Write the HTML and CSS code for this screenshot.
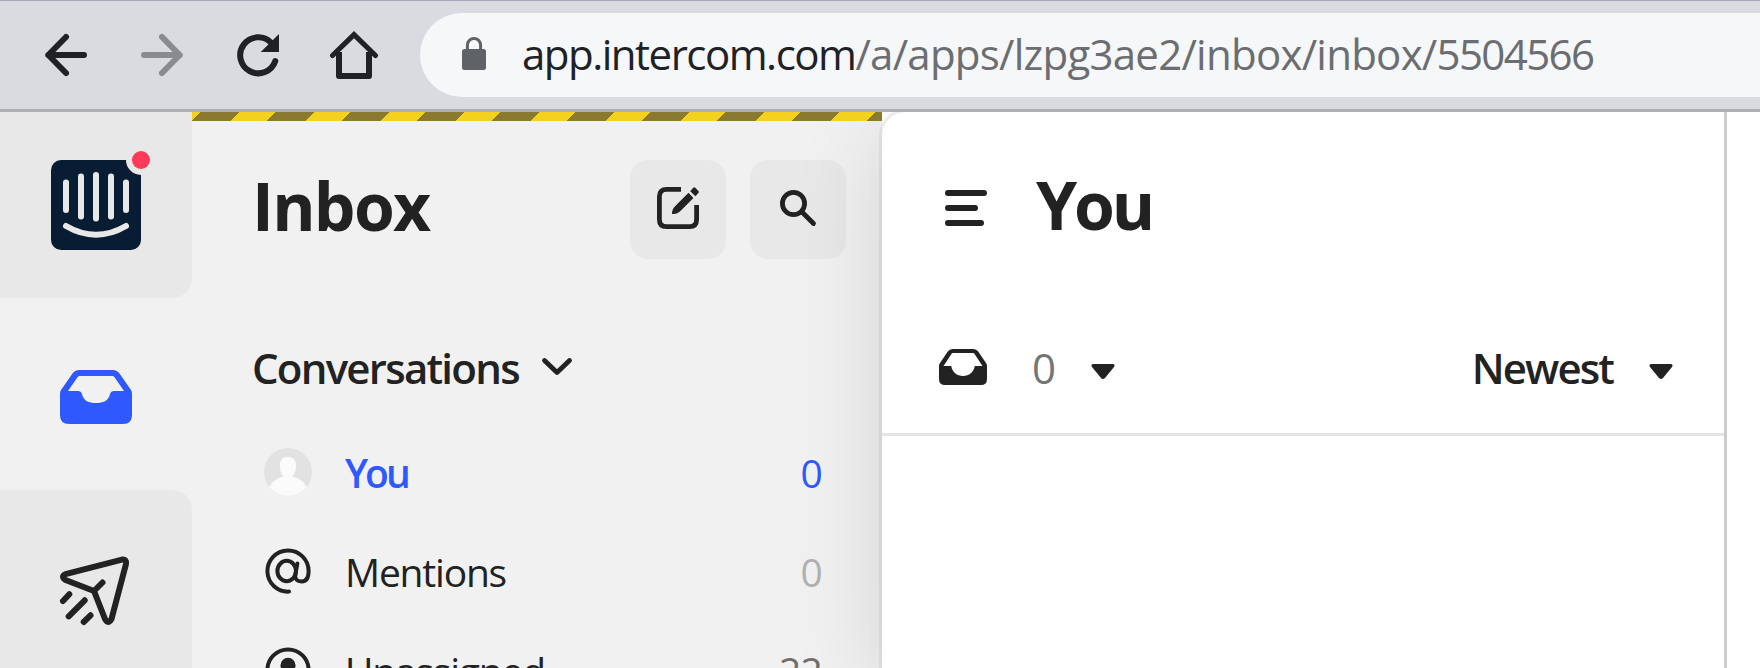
FILE: index.html
```html
<!DOCTYPE html>
<html lang="en">
<head>
<meta charset="utf-8">
<title>Inbox</title>
<link rel="stylesheet" href="styles.css">
</head>
<body>
<header class="browser-bar">
  <nav class="browser-nav">
    <svg width="42" height="42" viewBox="0 0 42 42" class="line-icon w6"><path d="M21 3L3.3 21L21 39M3.3 21H39"/></svg>
    <svg width="42" height="42" viewBox="0 0 42 42" class="line-icon w6 disabled"><path d="M21 3L38.7 21L21 39M38.7 21H3"/></svg>
    <svg width="42" height="42" viewBox="0 0 42 42" class="line-icon w6"><path d="M38.3 27A18 18 0 1 1 34 8.6"/><path class="solid" d="M42 0V18H23.7Z"/></svg>
    <svg width="48" height="48" viewBox="0 0 48 48" class="line-icon w6 home"><path class="roof" d="M2.5 24.5L24 3.6L45.5 24.5"/><path d="M9 21V45H39V21" stroke-linecap="butt"/></svg>
  </nav>
  <div class="address">
    <svg width="24" height="33" viewBox="0 0 24 33" class="lock"><rect y="12" width="24" height="21" rx="2.500"/><path d="M5.400 13V8.100a6.600 6.600 0 0 1 13.200 0V13" fill="none" stroke="#5f6368" stroke-width="3"/></svg>
    <span class="url"><span class="host">app.intercom.com</span><span class="path">/a/apps/lzpg3ae2/inbox/inbox/</span><span class="path path-id">5504566</span></span>
  </div>
</header>
<main class="app">
  <nav class="rail">
    <div class="rail-top">
      <svg width="105" height="105" viewBox="0 -15 105 105" class="logo">
        <rect width="90" height="90" rx="10" fill="#081d34"/>
        <g fill="none" stroke="#e8e8e8" stroke-width="6" stroke-linecap="round"><path d="M15 22.5V50M30 16.5V56.5M45 15V58.5M60 16.5V56.5M75 22.5V50M15 66Q45 83.5 75 66"/></g>
        <circle cx="90" cy="0" r="15" fill="#e8e8e8"/><circle cx="90" cy="0" r="9" fill="#fd3a57"/>
      </svg>
    </div>
    <div class="rail-active">
      <svg width="72" height="54" viewBox="0 0 72 54"><path fill="#2f58ff" fill-rule="evenodd" d="M19 0H53Q57 0 59.5 3.5L71 20Q72 21.5 72 24V45Q72 54 63 54H9Q0 54 0 45V24Q0 21.5 1 20L12.5 3.5Q15 0 19 0ZM19.5 6Q18.3 6 17.5 7.2L8 21H18Q21 21 22 24C23.5 31 29 33 36 33C43 33 48.5 31 50 24Q51 21 54 21H64L54.5 7.2Q53.7 6 52.5 6Z"/></svg>
    </div>
    <div class="rail-bottom">
      <svg width="70" height="70" viewBox="0 0 70 70" class="line-icon w6"><path d="M5.5 18.2L62 3.6Q67 3 66 8L51.5 63Q48 69 45 63L34 35L5.5 24Q0.5 20.5 5.5 18.2ZM34 35L42.5 26.5M9.3 38.3L3 45M24.7 44.3L8.7 60.3M30.5 59.3L23.7 66"/></svg>
    </div>
  </nav>
  <aside class="sidebar">
    <div class="warning-stripe"></div>
    <div class="sidebar-head">
      <h1 class="title title-inbox">Inbox</h1>
      <button class="tool"><svg width="42" height="42" viewBox="0 0 42 42"><path d="M24 2.4H9.5Q2.4 2.4 2.4 9.5V32.500Q2.4 39.600 9.500 39.600H32.500Q39.600 39.600 39.600 32.500V18" fill="none" stroke="#222" stroke-width="4.800"/><path fill="#222" d="M15 27C15 22.500 16.800 20.500 20 17.300L31.500 5.800L36.400 11L25 22.400C22 25.400 20 27 15 27ZM33.200 4.200L36.200 .8Q37.200 -.2 38.300 .8L41.400 4Q42.400 5 41.400 6.100L38.400 9.200Z"/></svg></button>
      <button class="tool"><svg width="36" height="36" viewBox="0 0 36 36" class="line-icon w5"><circle cx="13.500" cy="13.500" r="11.100"/><path d="M22 22L33.500 33.500"/></svg></button>
    </div>
    <div class="section">
      <span class="section-label">Conversations</span>
      <svg width="30" height="18" viewBox="0 0 30 18" class="line-icon w5"><path d="M2.500 2.500L15 14.500L27.500 2.500"/></svg>
    </div>
    <ul class="menu">
      <li class="row current">
        <svg width="48" height="48" viewBox="0 0 48 48"><defs><clipPath id="disc"><circle cx="24" cy="24" r="24"/></clipPath></defs><g clip-path="url(#disc)"><rect width="48" height="48" fill="#e2e2e2"/><path fill="#fbfbfb" d="M24 9C29.500 9 32 12 32 17.500C32 23 30.500 26 28.500 28.800C36 30 41 35 43 40V48H5V40C7 35 12 30 19.500 28.800C17.500 26 16 23 16 17.500C16 12 18.500 9 24 9Z"/></g></svg>
        <span class="label label-you">You</span><span class="count">0</span>
      </li>
      <li class="row">
        <svg width="48" height="48" viewBox="0 0 48 48" class="line-icon w4"><path d="M25 44.600A20.600 20.600 0 1 1 44.600 24C44.600 31 42 34.500 37.500 34.500C33 34.500 30.700 32 31.300 28L33.400 16.500"/><ellipse cx="22.700" cy="24" rx="9.300" ry="10.200"/></svg>
        <span class="label">Mentions</span><span class="count faint">0</span>
      </li>
      <li class="row">
        <svg width="48" height="48" viewBox="0 0 48 48" class="line-icon w4"><circle cx="24" cy="24" r="20.600"/><circle cx="24" cy="19.300" r="7.500" fill="#222" stroke="none"/><path d="M10 38Q24 24 38 38" fill="#222"/></svg>
        <span class="label">Unassigned</span><span class="count muted">22</span>
      </li>
    </ul>
  </aside>
  <section class="panel">
    <div class="panel-head">
      <svg width="42" height="36" viewBox="0 0 42 36" class="line-icon w6 burger"><path d="M3 3H39M3 18H30M3 33H36"/></svg>
      <h2 class="title title-you">You</h2>
    </div>
    <div class="filters">
      <svg width="48" height="36" viewBox="0 0 48 36"><path fill="#222" fill-rule="evenodd" d="M13.500 0H34.500Q37.500 0 39.200 2.500L47 14Q48 15.300 48 17V30Q48 36 42 36H6Q0 36 0 30V17Q0 15.300 1 14L8.800 2.500Q10.500 0 13.500 0ZM14 4Q13 4 12.400 4.900L4.500 17H12.300C13 23 18 27 24 27C30 27 35 23 35.700 17H43.500L35.600 4.900Q35 4 34 4Z"/></svg>
      <span class="filter-count">0</span>
      <svg width="24" height="16" viewBox="0 0 24 16" class="caret"><path d="M2 0H22Q24.500 .5 23 3L14 14Q12 16 10 14L1 3Q-.5 .5 2 0Z"/></svg>
      <span class="sort">Newest</span>
      <svg width="24" height="16" viewBox="0 0 24 16" class="caret"><path d="M2 0H22Q24.500 .5 23 3L14 14Q12 16 10 14L1 3Q-.5 .5 2 0Z"/></svg>
    </div>
  </section>
</main>
</body>
</html>
```
FILE: styles.css
```css
* { box-sizing: border-box; }
body {
  margin: 0;
  width: 1760px;
  height: 668px;
  overflow: hidden;
  display: flex;
  flex-direction: column;
  background: #fff;
  color: #222;
  font-family: "Open Sans", "Noto Sans", sans-serif;
}
svg { display: block; flex: none; overflow: visible; }
.line-icon { fill: none; stroke: #222; stroke-linecap: round; stroke-linejoin: round; }
.w4 { stroke-width: 4; }
.w5 { stroke-width: 4.8; }
.w6 { stroke-width: 6; }

.browser-bar {
  position: relative;
  z-index: 2;
  flex: none;
  height: 112px;
  display: flex;
  align-items: center;
  background: #dadbe0;
  border-top: 1px solid #a4a7b8;
  border-bottom: 3px solid #aeafb3;
  padding-left: 45px;
}
.browser-nav { display: flex; align-items: center; gap: 54px; width: 375px; }
.browser-nav .line-icon { stroke: #202124; }
.browser-nav .disabled { stroke: #8a8b8e; }
.browser-nav .home { margin-left: -3px; }
.browser-nav .solid { fill: #202124; stroke: none; }
.roof { stroke-width: 5.2; stroke-linejoin: miter; }
.address {
  flex: 1;
  height: 84px;
  display: flex;
  align-items: center;
  border-radius: 42px 0 0 42px;
  background: #f5f7f9;
  padding-left: 42px;
}
.lock { fill: #5f6368; margin-top: -3px; }
.url { margin: -3px 0 0 36px; font-size: 42px; white-space: nowrap; }
.host { color: #202124; letter-spacing: -1.5px; }
.path { color: #6b6d70; letter-spacing: -.75px; }
.path-id { letter-spacing: -1.6px; }

.app { flex: 1; display: flex; min-height: 0; overflow: hidden; }
.rail { width: 192px; flex: none; display: flex; flex-direction: column; background: #f1f1f1; }
.rail-top { height: 186px; background: #e8e8e8; border-radius: 0 0 20px 0; padding: 33px 0 0 51px; }
.rail-active { height: 192px; padding: 72px 0 0 60px; }
.rail-bottom { flex: 1; background: #e8e8e8; border-radius: 0 20px 0 0; padding: 66px 0 0 60px; }

.sidebar { width: 690px; flex: none; background: #f1f1f1; height: 556px; overflow: hidden; }
.warning-stripe {
  position: relative;
  z-index: 1;
  height: 9px;
  background: repeating-linear-gradient(135deg, #f4d01f 0 6.36px, #8a7a2f 6.36px 33.9px, #f4d01f 33.9px 53.03px);
}
.sidebar-head { display: flex; margin-top: 39px; padding: 0 36px 0 60px; height: 99px; gap: 24px; }
.title { margin: 0; font-weight: 700; font-size: 66px; line-height: 90px; }
.title-inbox { flex: 1; letter-spacing: -1.7px; }
.tool {
  width: 96px;
  height: 99px;
  border: 0;
  padding: 0 0 3px;
  border-radius: 18px;
  background: #e8e8e8;
  display: flex;
  align-items: center;
  justify-content: center;
}
.section { display: flex; align-items: center; gap: 23px; height: 104px; margin-top: 59px; padding: 0 0 6px 60px; }
.section-label { font-size: 42px; font-weight: 600; letter-spacing: -1.75px; margin-top: 1px; }
.menu { margin: 0; padding: 0; list-style: none; }
.row { display: flex; align-items: center; height: 99px; padding: 0 60px 0 72px; font-size: 39px; }
.label { flex: 1; margin: 2px 0 0 33px; letter-spacing: -1.2px; }
.count { margin-top: 2px; letter-spacing: -.8px; }
.current { color: #2f58ff; }
.label-you { font-weight: 600; letter-spacing: -3px; }
.faint { color: #b1b1b1; }
.muted { color: #6f6f6f; }

.panel {
  position: relative;
  width: 842px;
  flex: none;
  background: #fff;
  border-top-left-radius: 24px;
  box-shadow: 0 0 0 3px rgba(0, 0, 0, .05), 0 20px 90px rgba(0, 0, 0, .13);
}
.app::after { content: ""; position: relative; flex: 1; background: #fff; border-left: 3px solid #ccc; }
.panel-head { display: flex; align-items: center; height: 195px; padding: 0 0 12px 63px; gap: 49px; }
.burger { margin-top: 8px; }
.title-you { letter-spacing: -3.2px; }
.filters { display: flex; align-items: center; height: 129px; border-bottom: 3px solid #e4e4e4; padding: 0 51px 6px 57px; font-size: 42px; }
.filter-count { margin: 1px 36px 0 45px; color: #757575; letter-spacing: -1px; }
.caret { fill: #222; margin-top: 9px; }
.sort { margin: 1px 36px 0 auto; font-weight: 600; letter-spacing: -1.9px; }
```
